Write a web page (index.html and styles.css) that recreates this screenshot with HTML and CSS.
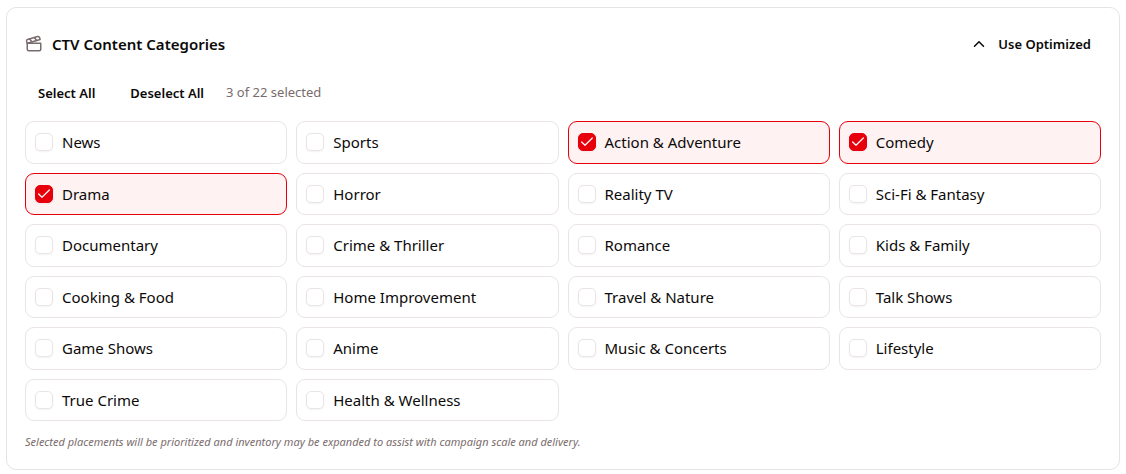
FILE: index.html
```html
<!DOCTYPE html>
<html lang="en">
<head>
    <meta charset="UTF-8">
    <meta name="viewport" content="width=device-width, initial-scale=1.0">
    <title>CTV Content Categories</title>
    <link rel="stylesheet" href="styles.css">
</head>
<body>

    <section class="card">
        <div class="card-header">
            <h2 class="card-title">
                <svg class="icon" viewBox="0 0 24 24" aria-hidden="true">
                    <path d="M20.2 6 3 11l-.9-2.4c-.3-1.1.3-2.2 1.3-2.5l13.5-4c1.1-.3 2.2.3 2.5 1.3Z"/>
                    <path d="m6.2 5.3 3.1 3.9"/>
                    <path d="m12.4 3.4 3.1 4"/>
                    <path d="M3 11h18v8a2 2 0 0 1-2 2H5a2 2 0 0 1-2-2Z"/>
                </svg>
                CTV Content Categories
            </h2>
            <button type="button" class="btn btn-toggle">
                <svg class="icon" viewBox="0 0 24 24" aria-hidden="true">
                    <path d="m18 15-6-6-6 6"/>
                </svg>
                Use Optimized
            </button>
        </div>

        <div class="toolbar">
            <button type="button" class="btn" onclick="setAll(true)">Select All</button>
            <button type="button" class="btn" onclick="setAll(false)">Deselect All</button>
            <span class="count" id="count">3 of 22 selected</span>
        </div>

        <div class="categories" id="categories">
            <label class="category"><input type="checkbox">News</label>
            <label class="category"><input type="checkbox">Sports</label>
            <label class="category"><input type="checkbox" checked>Action &amp; Adventure</label>
            <label class="category"><input type="checkbox" checked>Comedy</label>
            <label class="category"><input type="checkbox" checked>Drama</label>
            <label class="category"><input type="checkbox">Horror</label>
            <label class="category"><input type="checkbox">Reality TV</label>
            <label class="category"><input type="checkbox">Sci-Fi &amp; Fantasy</label>
            <label class="category"><input type="checkbox">Documentary</label>
            <label class="category"><input type="checkbox">Crime &amp; Thriller</label>
            <label class="category"><input type="checkbox">Romance</label>
            <label class="category"><input type="checkbox">Kids &amp; Family</label>
            <label class="category"><input type="checkbox">Cooking &amp; Food</label>
            <label class="category"><input type="checkbox">Home Improvement</label>
            <label class="category"><input type="checkbox">Travel &amp; Nature</label>
            <label class="category"><input type="checkbox">Talk Shows</label>
            <label class="category"><input type="checkbox">Game Shows</label>
            <label class="category"><input type="checkbox">Anime</label>
            <label class="category"><input type="checkbox">Music &amp; Concerts</label>
            <label class="category"><input type="checkbox">Lifestyle</label>
            <label class="category"><input type="checkbox">True Crime</label>
            <label class="category"><input type="checkbox">Health &amp; Wellness</label>
        </div>

        <p class="note">Selected placements will be prioritized and inventory may be expanded to assist with campaign scale and delivery.</p>
    </section>

    <script>
        const boxes = document.querySelectorAll('#categories input');

        function updateCount() {
            const selected = document.querySelectorAll('#categories input:checked').length;
            document.getElementById('count').textContent = selected + ' of ' + boxes.length + ' selected';
        }

        function setAll(value) {
            boxes.forEach((box) => {
                box.checked = value;
            });
            updateCount();
        }

        document.getElementById('categories').addEventListener('change', updateCount);
    </script>

</body>
</html>
```
FILE: styles.css
```css
* {
    box-sizing: border-box;
}
body {
    margin: 7px 6px 4px;
    font-family: "Segoe UI", "Noto Sans", sans-serif;
    font-size: 15px;
    line-height: 1.5;
    color: #0c0a09;
    background-color: #fff;
}
.card {
    padding: 18px;
    border: 1px solid #e7e2e3;
    border-radius: 10px;
}
.card-header {
    display: flex;
    align-items: center;
    justify-content: space-between;
    height: 36px;
}
.card-title {
    display: flex;
    align-items: center;
    gap: 9px;
    margin: 0;
    font-size: 15px;
    font-weight: 600;
}
.icon {
    width: 18px;
    height: 18px;
    fill: none;
    stroke: currentColor;
    stroke-width: 2;
    stroke-linecap: round;
    stroke-linejoin: round;
}
.card-title .icon {
    color: #7a6c6c;
}
.btn {
    display: flex;
    align-items: center;
    height: 36px;
    padding: 0 13px;
    border: none;
    border-radius: 8px;
    background: none;
    color: inherit;
    font-family: inherit;
    font-size: 13px;
    font-weight: 600;
    cursor: pointer;
}
.btn:hover {
    background-color: #f5f5f4;
}
.btn-toggle {
    gap: 10px;
    padding: 0 10px;
}
.toolbar {
    display: flex;
    align-items: center;
    gap: 9px;
    margin: 13px 0 10px;
}
.count {
    font-size: 13px;
    color: #7a6c6c;
}
.categories {
    display: grid;
    grid-template-columns: repeat(4, 1fr);
    gap: 9px;
}
.category {
    display: flex;
    align-items: center;
    gap: 9px;
    padding: 9px;
    border: 1px solid #ebe4e4;
    border-radius: 9px;
    cursor: pointer;
}
.category:has(input:checked) {
    border-color: #e7000b;
    background-color: #fef2f2;
}
.category input {
    appearance: none;
    width: 18px;
    height: 18px;
    margin: 0;
    border: 1px solid #ebe4e4;
    border-radius: 5px;
    background-color: #fff;
    box-shadow: 0 1px 2px rgba(0, 0, 0, 0.05);
    cursor: pointer;
}
.category input:checked {
    border-color: #e7000b;
    background: #e7000b url("data:image/svg+xml,%3Csvg xmlns='http://www.w3.org/2000/svg' viewBox='0 0 24 24' fill='none' stroke='%23fef2f2' stroke-width='2' stroke-linecap='round' stroke-linejoin='round'%3E%3Cpath d='M20 6 9 17l-5-5'/%3E%3C/svg%3E") center / 16px no-repeat;
}
.note {
    margin: 13px 0 0;
    font-size: 11px;
    font-style: italic;
    color: #7a6c6c;
}
```
